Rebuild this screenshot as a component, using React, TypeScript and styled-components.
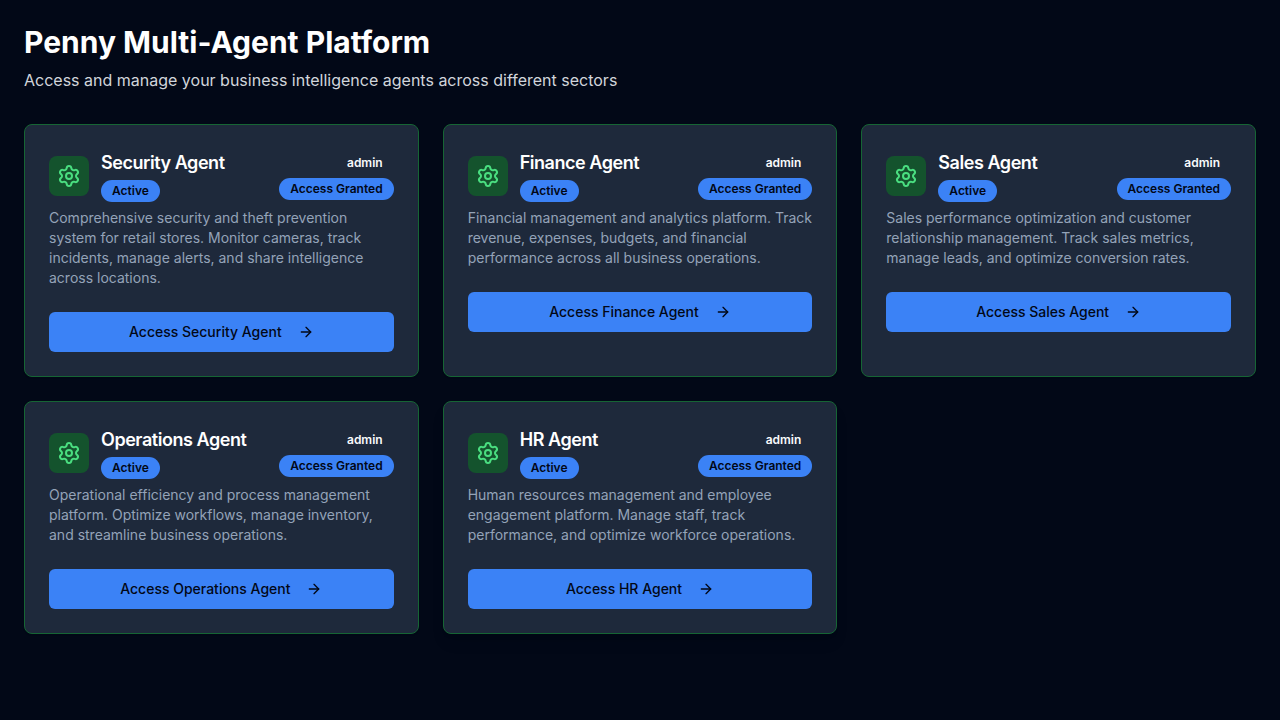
import React from "react";
import styled, { createGlobalStyle } from "styled-components";
import { ArrowRight, Settings } from "lucide-react";

const GlobalStyle = createGlobalStyle`
  *, *::before, *::after { box-sizing: border-box; }
  body {
    margin: 0;
    background: #020817;
    color: #f8fafc;
    font-family: Inter, "Liberation Sans", sans-serif;
    font-size: 16px;
    line-height: 24px;
  }
  h1, h2, p { margin: 0; }
`;

const Page = styled.main`
  min-height: 100vh;
  padding: 24px;
`;

const PageHeader = styled.header`
  display: flex;
  flex-direction: column;
  gap: 8px;
  margin-bottom: 32px;
`;

const PageTitle = styled.h1`
  font-size: 30px;
  line-height: 36px;
  font-weight: 700;
  color: #ffffff;
`;

const Subtitle = styled.p`
  color: #d1d5db;
`;

const Grid = styled.section`
  display: grid;
  grid-template-columns: repeat(3, minmax(0, 1fr));
  gap: 24px;

  @media (max-width: 1023px) {
    grid-template-columns: repeat(2, minmax(0, 1fr));
  }
  @media (max-width: 767px) {
    grid-template-columns: minmax(0, 1fr);
  }
`;

const raisedShadow =
  "0 10px 15px -3px rgba(0, 0, 0, 0.1), 0 4px 6px -4px rgba(0, 0, 0, 0.1)";

const Card = styled.article<{ $raised?: boolean }>`
  padding: 24px;
  border: 1px solid #166534;
  border-radius: 8px;
  background: #1e293b;
  box-shadow: ${({ $raised }) => ($raised ? raisedShadow : "0 1px 2px rgba(0, 0, 0, 0.05)")};

  &:hover { box-shadow: ${raisedShadow}; }
`;

const CardHeader = styled.div`
  display: flex;
  align-items: center;
  justify-content: space-between;
  margin-bottom: 6px;
`;

const Identity = styled.div`
  display: flex;
  align-items: center;
  gap: 12px;
`;

const IconTile = styled.div`
  display: flex;
  padding: 8px;
  border-radius: 8px;
  background: #14532d;
  color: #4ade80;
`;

const Stack = styled.div<{ $align: "flex-start" | "flex-end" }>`
  display: flex;
  flex-direction: column;
  align-items: ${({ $align }) => $align};
  gap: 4px;
`;

const CardTitle = styled.h2`
  font-size: 18px;
  line-height: 27px;
  font-weight: 600;
  letter-spacing: -0.025em;
  color: #ffffff;
`;

const Badge = styled.span<{ $plain?: boolean }>`
  padding: 2px 10px;
  border: 1px solid transparent;
  border-radius: 11px;
  font-size: 12px;
  line-height: 16px;
  font-weight: 600;
  white-space: nowrap;
  background: ${({ $plain }) => ($plain ? "transparent" : "#3b82f6")};
  color: ${({ $plain }) => ($plain ? "#f8fafc" : "#020817")};
`;

const Description = styled.p`
  margin-bottom: 24px;
  font-size: 14px;
  line-height: 20px;
  color: #94a3b8;
`;

const AccessButton = styled.button`
  display: flex;
  align-items: center;
  justify-content: center;
  gap: 16px;
  width: 100%;
  height: 40px;
  padding: 8px 16px;
  border: 0;
  border-radius: 6px;
  background: #3b82f6;
  color: #020817;
  font: inherit;
  font-size: 14px;
  line-height: 20px;
  font-weight: 500;
  cursor: pointer;

  &:hover { background: #3576de; }
`;

const agents = [
  {
    name: "Security Agent",
    description:
      "Comprehensive security and theft prevention system for retail stores. Monitor cameras, track incidents, manage alerts, and share intelligence across locations.",
  },
  {
    name: "Finance Agent",
    description:
      "Financial management and analytics platform. Track revenue, expenses, budgets, and financial performance across all business operations.",
  },
  {
    name: "Sales Agent",
    description:
      "Sales performance optimization and customer relationship management. Track sales metrics, manage leads, and optimize conversion rates.",
  },
  {
    name: "Operations Agent",
    description:
      "Operational efficiency and process management platform. Optimize workflows, manage inventory, and streamline business operations.",
  },
  {
    name: "HR Agent",
    description:
      "Human resources management and employee engagement platform. Manage staff, track performance, and optimize workforce operations.",
    raised: true,
  },
];

export default function App() {
  return (
    <>
      <GlobalStyle />
      <Page>
        <PageHeader>
          <PageTitle>Penny Multi-Agent Platform</PageTitle>
          <Subtitle>
            Access and manage your business intelligence agents across different sectors
          </Subtitle>
        </PageHeader>
        <Grid>
          {agents.map(({ name, description, raised }) => (
            <Card key={name} $raised={raised}>
              <CardHeader>
                <Identity>
                  <IconTile>
                    <Settings size={24} aria-hidden />
                  </IconTile>
                  <Stack $align="flex-start">
                    <CardTitle>{name}</CardTitle>
                    <Badge>Active</Badge>
                  </Stack>
                </Identity>
                <Stack $align="flex-end">
                  <Badge $plain>admin</Badge>
                  <Badge>Access Granted</Badge>
                </Stack>
              </CardHeader>
              <Description>{description}</Description>
              <AccessButton type="button">
                Access {name}
                <ArrowRight size={16} aria-hidden />
              </AccessButton>
            </Card>
          ))}
        </Grid>
      </Page>
    </>
  );
}
